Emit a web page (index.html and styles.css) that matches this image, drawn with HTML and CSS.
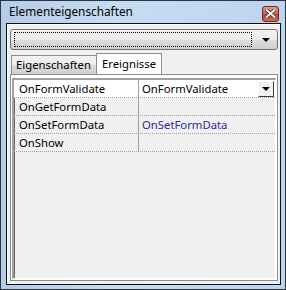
FILE: index.html
```html
<!DOCTYPE html>
<html lang="de">
<head>
    <meta charset="UTF-8">
    <title>Elementeigenschaften</title>
    <link rel="stylesheet" href="styles.css">
</head>
<body>
    <div class="window">
        <div class="titlebar">
            <span class="title">Elementeigenschaften</span>
            <div class="close-btn">
                <svg width="11" height="9" viewBox="0 0 11 9">
                    <path d="M1.5 1 L9.5 8 M9.5 1 L1.5 8" stroke="#3a3a3a" stroke-width="3.4" stroke-linecap="square"/>
                    <path d="M1.5 1 L9.5 8 M9.5 1 L1.5 8" stroke="#ffffff" stroke-width="1.8" stroke-linecap="square"/>
                </svg>
            </div>
        </div>
        <div class="client">
            <div class="combo">
                <div class="combo-focus"></div>
                <div class="combo-arrow"></div>
            </div>
            <div class="tabs">
                <div class="tab">Eigenschaften</div>
                <div class="tab active">Ereignisse</div>
            </div>
            <div class="panel">
                <div class="grid">
                    <div class="row first">
                        <div class="cell name">OnFormValidate</div>
                        <div class="cell value edit">
                            <span>OnFormValidate</span>
                            <div class="cell-btn"><div class="tri"></div></div>
                        </div>
                    </div>
                    <div class="row">
                        <div class="cell name">OnGetFormData</div>
                        <div class="cell value"></div>
                    </div>
                    <div class="row">
                        <div class="cell name">OnSetFormData</div>
                        <div class="cell value link">OnSetFormData</div>
                    </div>
                    <div class="row">
                        <div class="cell name">OnShow</div>
                        <div class="cell value"></div>
                    </div>
                </div>
            </div>
        </div>
    </div>
</body>
</html>
```

FILE: styles.css
```css
body {
    margin: 0;
    font-family: "Noto Sans", sans-serif;
    font-size: 11.3px;
    color: #000;
}
.window {
    width: 284px;
    height: 288px;
    border: 1px solid #2e3338;
    background: linear-gradient(to right, #b3cce8, #c6dcf3 40%, #bcd5ef);
    display: flex;
    flex-direction: column;
}
.titlebar {
    height: 22px;
    display: flex;
    align-items: center;
    justify-content: space-between;
    padding: 0 6px 0 8px;
}
.title {
    font-size: 11.8px;
    margin-top: -2px;
}
.close-btn {
    width: 15px;
    height: 14px;
    margin-top: 3px;
    border: 1px solid #6e2a20;
    border-radius: 3px;
    background: linear-gradient(#e59a86, #d2604a 50%, #c23e24 51%, #d2684c);
    display: flex;
    align-items: center;
    justify-content: center;
}
.client {
    flex: 1;
    margin: 0 4px 4px 5px;
    border: 1px solid #101010;
    box-shadow: 1px 1px 0 #ffffff inset;
    background: #f0f0f0;
    padding: 5px 2px 3px 3px;
    display: flex;
    flex-direction: column;
}
.combo {
    height: 19px;
    border: 1px solid #707070;
    border-radius: 3px;
    background: linear-gradient(#f2f2f2, #ebebeb 50%, #dddddd 51%, #cfcfcf);
    display: flex;
    align-items: center;
    padding: 0 3px;
}
.combo-focus {
    flex: 1;
    height: 13px;
    border: 1px dotted #000;
}
.combo-arrow {
    width: 0;
    height: 0;
    margin: 1px 4px 0 10px;
    border-left: 4px solid transparent;
    border-right: 4px solid transparent;
    border-top: 4px solid #000;
}
.tabs {
    display: flex;
    align-items: flex-end;
    margin-top: 2px;
    padding-left: 1px;
    height: 22px;
}
.tab {
    height: 18px;
    padding: 0 5px 0 4px;
    border: 1px solid #898c95;
    border-bottom: none;
    background: linear-gradient(#f2f2f2, #ebebeb 50%, #dddddd 51%, #cfcfcf);
    line-height: 18px;
}
.tab.active {
    height: 21px;
    padding: 0 5px;
    margin-left: -1px;
    margin-bottom: -1px;
    background: #ffffff;
    line-height: 19px;
}
.panel {
    flex: 1;
    border: 1px solid #898c95;
    background: #ffffff;
    padding: 3px 1px 1px 1px;
    display: flex;
}
.grid {
    flex: 1;
    border-style: solid;
    border-width: 2px 1px 1px 2px;
    border-color: #a0a0a0 #ffffff #ffffff #a0a0a0;
    background: #f0f0f0;
    box-shadow: 1px 1px 0 #696969 inset;
}
.row {
    display: flex;
    height: 17px;
    border-bottom: 1px dotted #a0a0a0;
}
.row.first {
    background: #ffffff;
}
.cell {
    line-height: 17px;
    padding-left: 5px;
}
.name {
    width: 119px;
    border-right: 1px solid #a0a0a0;
}
.value {
    flex: 1;
    padding-left: 3px;
    display: flex;
    justify-content: space-between;
}
.link {
    color: #2c2a9c;
}
.cell-btn {
    width: 14px;
    height: 14px;
    margin: 1px 1px 0 0;
    border: 1px solid;
    border-color: #ffffff #404040 #404040 #ffffff;
    background: #f0f0f0;
    display: flex;
    align-items: center;
    justify-content: center;
}
.tri {
    width: 0;
    height: 0;
    border-left: 4px solid transparent;
    border-right: 4px solid transparent;
    border-top: 4px solid #000;
}
```
